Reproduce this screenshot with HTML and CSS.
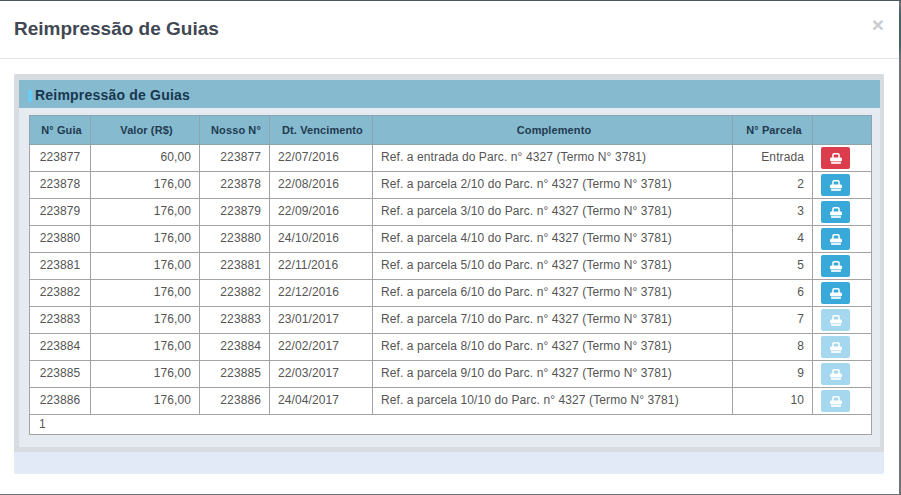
FILE: index.html
```html
<!DOCTYPE html>
<html lang="pt">
<head>
<meta charset="utf-8">
<title>Reimpressão de Guias</title>
<link rel="stylesheet" href="styles.css">
</head>
<body>
<svg class="sprite" width="0" height="0" aria-hidden="true"><symbol id="print" viewBox="0 0 12 11"><path fill="currentColor" fill-rule="evenodd" d="M4.200 0h3.600C9 0 9.800.8 9.800 2v2.600h.7c.9 0 1.500.6 1.500 1.500V8H0V6.100c0-.9.6-1.500 1.500-1.500h.7V2C2.200.8 3 0 4.200 0zM4.400 1.400c-.4 0-.7.300-.7.700v2.500h4.600V2.100c0-.4-.3-.7-.7-.7z"/><path fill="currentColor" opacity=".85" d="M1 8.500h10V10c0 .6-.4 1-1 1H2c-.6 0-1-.4-1-1z"/></symbol></svg>
<div class="modal">
  <header class="modal-header">
    <h1>Reimpressão de Guias</h1>
    <span class="close">×</span>
  </header>
  <main class="modal-body">
    <section class="panel">
      <div class="panel-inner">
        <h2 class="panel-title"><span class="mark"></span>Reimpressão de Guias</h2>
        <div class="panel-content">
          <table>
            <colgroup><col class="c1"><col class="c2"><col class="c3"><col class="c4"><col class="c5"><col class="c6"><col class="c7"></colgroup>
            <thead><tr><th>N° Guia</th><th>Valor (R$)</th><th>Nosso N°</th><th>Dt. Vencimento</th><th>Complemento</th><th>N° Parcela</th><th></th></tr></thead>
            <tbody>
              <tr><td class="ctr">223877</td><td class="num">60,00</td><td class="num">223877</td><td>22/07/2016</td><td class="txt">Ref. a entrada do Parc. n° 4327 (Termo N° 3781)</td><td class="num">Entrada</td><td class="act"><span class="btn red"><svg><use href="#print"/></svg></span></td></tr>
              <tr><td class="ctr">223878</td><td class="num">176,00</td><td class="num">223878</td><td>22/08/2016</td><td class="txt">Ref. a parcela 2/10 do Parc. n° 4327 (Termo N° 3781)</td><td class="num">2</td><td class="act"><span class="btn"><svg><use href="#print"/></svg></span></td></tr>
              <tr><td class="ctr">223879</td><td class="num">176,00</td><td class="num">223879</td><td>22/09/2016</td><td class="txt">Ref. a parcela 3/10 do Parc. n° 4327 (Termo N° 3781)</td><td class="num">3</td><td class="act"><span class="btn"><svg><use href="#print"/></svg></span></td></tr>
              <tr><td class="ctr">223880</td><td class="num">176,00</td><td class="num">223880</td><td>24/10/2016</td><td class="txt">Ref. a parcela 4/10 do Parc. n° 4327 (Termo N° 3781)</td><td class="num">4</td><td class="act"><span class="btn"><svg><use href="#print"/></svg></span></td></tr>
              <tr><td class="ctr">223881</td><td class="num">176,00</td><td class="num">223881</td><td>22/11/2016</td><td class="txt">Ref. a parcela 5/10 do Parc. n° 4327 (Termo N° 3781)</td><td class="num">5</td><td class="act"><span class="btn"><svg><use href="#print"/></svg></span></td></tr>
              <tr><td class="ctr">223882</td><td class="num">176,00</td><td class="num">223882</td><td>22/12/2016</td><td class="txt">Ref. a parcela 6/10 do Parc. n° 4327 (Termo N° 3781)</td><td class="num">6</td><td class="act"><span class="btn"><svg><use href="#print"/></svg></span></td></tr>
              <tr><td class="ctr">223883</td><td class="num">176,00</td><td class="num">223883</td><td>23/01/2017</td><td class="txt">Ref. a parcela 7/10 do Parc. n° 4327 (Termo N° 3781)</td><td class="num">7</td><td class="act"><span class="btn off"><svg><use href="#print"/></svg></span></td></tr>
              <tr><td class="ctr">223884</td><td class="num">176,00</td><td class="num">223884</td><td>22/02/2017</td><td class="txt">Ref. a parcela 8/10 do Parc. n° 4327 (Termo N° 3781)</td><td class="num">8</td><td class="act"><span class="btn off"><svg><use href="#print"/></svg></span></td></tr>
              <tr><td class="ctr">223885</td><td class="num">176,00</td><td class="num">223885</td><td>22/03/2017</td><td class="txt">Ref. a parcela 9/10 do Parc. n° 4327 (Termo N° 3781)</td><td class="num">9</td><td class="act"><span class="btn off"><svg><use href="#print"/></svg></span></td></tr>
              <tr><td class="ctr">223886</td><td class="num">176,00</td><td class="num">223886</td><td>24/04/2017</td><td class="txt">Ref. a parcela 10/10 do Parc. n° 4327 (Termo N° 3781)</td><td class="num">10</td><td class="act"><span class="btn off"><svg><use href="#print"/></svg></span></td></tr>
            </tbody>
            <tfoot><tr><td colspan="7" class="pager">1</td></tr></tfoot>
          </table>
        </div>
      </div>
      <div class="panel-footer"></div>
    </section>
  </main>
</div>
</body>
</html>
```
FILE: styles.css
```css
* { box-sizing: border-box; }
html, body { margin: 0; height: 100%; }
body { background: linear-gradient(to bottom, #4a5560 0 1px, #6a6f73 1px 5px, #446468 15px 45px, #6f7377 60px); overflow: hidden; font-family: "Liberation Sans", Arial, sans-serif; }
.sprite { position: absolute; }
.modal { width: 899px; height: 493px; margin-top: 1px; background: #fff; display: flex; flex-direction: column; }
.modal-header { height: 58px; border-bottom: 1px solid #e5e5e5; padding: 0 14px; display: flex; align-items: center; justify-content: space-between; flex: none; }
.modal-header h1 { margin: 0; font-size: 19px; line-height: 1.1; font-weight: 700; color: #3f4853; }
.close { font-size: 21px; font-weight: 700; color: #c9cccf; line-height: 1; margin: 0 1px 10px 0; }
.modal-body { padding: 15px 15px 0 14px; }
.panel { background: #e1eaf6; border-radius: 2px; overflow: hidden; }
.panel-inner { background: #e6ebf2; border: solid #d8dce0; border-width: 6px 4px 5px 5px; }
.panel-title { margin: 0; height: 28px; background: #86bacf; color: #17374f; font-size: 14px; font-weight: 700; letter-spacing: .2px; display: flex; align-items: center; padding: 2px 0 0 16px; position: relative; }
.mark { position: absolute; left: 9px; top: 10px; width: 4px; height: 12px; background: #66ccf5; }
.panel-content { padding: 7px 8px 12px 10px; }
.panel-footer { height: 22px; }
table { width: 843px; table-layout: fixed; border-collapse: collapse; background: #fff; font-size: 12px; letter-spacing: .1px; color: #555; }
.c1 { width: 61px; } .c2 { width: 109px; } .c3 { width: 70px; } .c4 { width: 103px; } .c5 { width: 360px; } .c6 { width: 80px; } .c7 { width: 59px; }
th, td { border: 1px solid #a3a3a3; height: 27px; white-space: nowrap; }
th { height: 29px; background: #86bacf; color: #1f3a50; font-size: 11px; font-weight: 700; text-align: center; letter-spacing: .1px; border-color: #8ea4ae; padding: 0 2px 0 5px; }
td { padding: 0 8px 2px; }
.num { text-align: right; }
.ctr { text-align: center; }
.act { padding: 0 8px; }
.pager { height: 20px; text-align: left; padding: 0 9px 2px; }
.btn { display: flex; width: 29px; height: 22px; align-items: center; justify-content: center; background: #39a9d9; color: #fff; border-radius: 2px; }
.btn svg { width: 12px; height: 11px; display: block; }
.red { background: #dc3d4c; }
.off { background: #a5d8ee; }
```
